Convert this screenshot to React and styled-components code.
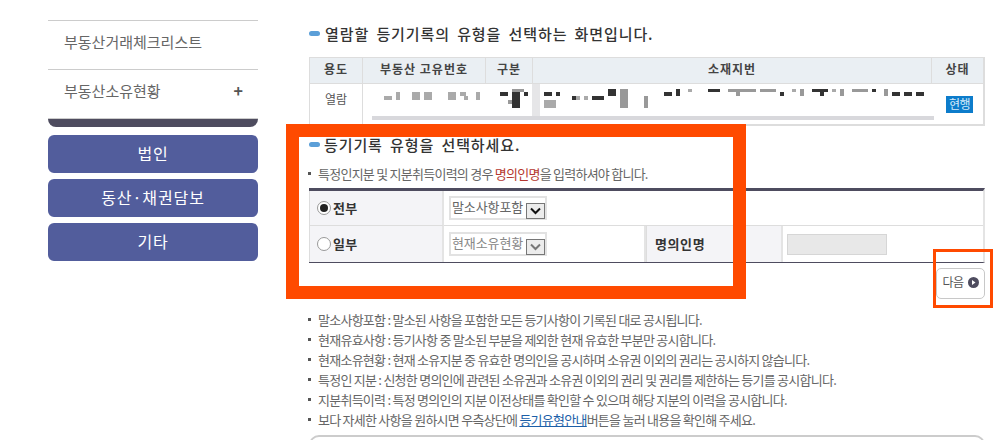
import React from 'react';
import styled, { createGlobalStyle } from 'styled-components';

const Global = createGlobalStyle`
  html, body {
    margin: 0;
    padding: 0;
    background: #fff;
    overflow: hidden;
  }
  body {
    font-family: 'Noto Sans CJK KR', 'Noto Sans', sans-serif;
  }
`;

const Page = styled.div`
  position: relative;
  width: 1007px;
  height: 440px;
  overflow: hidden;
  display: flex;
  align-items: flex-start;
  padding-left: 48px;
  box-sizing: border-box;
`;

const Sidebar = styled.aside`
  width: 210px;
  padding-top: 20px;
  margin-right: 51px;
  flex-shrink: 0;
`;

const MenuItem = styled.div`
  height: 49px;
  box-sizing: border-box;
  border-top: 1px solid #ccc;
  padding: 0 15px 8px 16px;
  display: flex;
  align-items: center;
  justify-content: space-between;
  font-size: 15px;
  color: #666;
`;

const Plus = styled.span`
  font-size: 16px;
  font-weight: 700;
  color: #555;
  margin-top: -1px;
`;

const DarkEnd = styled.div`
  height: 9px;
  background: #4e4c5f;
  border-top: 1px solid #ccc;
  box-sizing: border-box;
  border-radius: 0 0 8px 8px;
  margin-bottom: 8px;
`;

const CatButton = styled.div`
  height: 38px;
  margin-bottom: 6px;
  padding-bottom: 3px;
  box-sizing: border-box;
  border-radius: 6px;
  background: #525d9c;
  color: #fff;
  font-size: 16px;
  letter-spacing: 0.9px;
  display: flex;
  align-items: center;
  justify-content: center;
`;

const Main = styled.main`
  width: 676px;
  flex-shrink: 0;
  padding-top: 22px;
`;

const Heading = styled.h2`
  margin: ${({ $top }) => $top || 0}px 0 0;
  height: 22px;
  display: flex;
  align-items: center;
  gap: ${({ $gap }) => $gap || 5}px;
  font-size: 15px;
  font-weight: 500;
  letter-spacing: 0.9px;
  word-spacing: 3px;
  color: #333;

  &::before {
    content: '';
    width: 11px;
    height: 5px;
    border-radius: 3px;
    background: #5b9fd8;
  }
`;

const Table = styled.div`
  display: grid;
  grid-template-columns: 53px 123px 47px 399px 1fr;
  grid-template-rows: 26px 1fr;
  margin-top: 13px;
  border: 1px solid #ddd;
  border-width: 1px 2px 2px 1px;
  height: 69px;
  box-sizing: border-box;
`;

const HeadCell = styled.div`
  height: 26px;
  background: #eaeff3;
  border-bottom: 1px solid #ddd;
  border-right: 1px solid #ddd;
  box-sizing: border-box;
  padding-bottom: 4px;
  display: flex;
  align-items: center;
  justify-content: center;
  font-size: 12px;
  font-weight: 700;
  letter-spacing: 1px;
  color: #444;

  &:nth-child(5) {
    border-right: 0;
  }
`;

const BodyCell = styled.div`
  display: flex;
  align-items: flex-start;
  justify-content: center;
  padding-top: ${({ $top }) => $top ?? 9}px;
  border-right: ${({ $line }) => ($line ? '1px solid #ddd' : '0')};
  font-size: 12px;
  color: #555;
`;

const Masked = styled.svg`
  position: absolute;
  left: 372px;
  top: 84px;
`;

const Badge = styled.span`
  background: #0d7ccb;
  color: #d6ebfa;
  font-size: 12px;
  letter-spacing: -0.5px;
  line-height: 15px;
  width: 27px;
  height: 17px;
  text-align: center;
  margin-left: 4px;
`;

const Note = styled.p`
  margin: ${({ $top }) => $top || 0}px 0 0;
  height: 20px;
  padding-bottom: 1px;
  box-sizing: border-box;
  display: flex;
  align-items: center;
  font-size: 13px;
  letter-spacing: -0.75px;
  color: #666;
  white-space: pre;

  &::before {
    content: '';
    width: 3px;
    height: 3px;
    background: #555;
    margin: 0 7px 0 -1px;
  }
`;

const Red = styled.span`
  color: #b5372f;
`;

const Link = styled.span`
  color: #1c5fa8;
  text-decoration: underline;
`;

const FormTable = styled.div`
  margin-top: 4px;
  border-top: 3px solid #4e4c5f;
  border-bottom: 1px solid #4e4c5f;
  border-right: 2px solid #e4e4e4;
  display: grid;
  grid-template-columns: 135px 202px 137px 1fr;
  grid-template-rows: 35px 36px;
  box-sizing: border-box;
`;

const Label = styled.div`
  background: #f4f4f7;
  border-left: 1px solid #ddd;
  border-right: 2px solid #e4e4e4;
  border-bottom: ${({ $last }) => ($last ? '0' : '1px solid #ddd')};
  box-sizing: border-box;
  display: flex;
  align-items: center;
  padding-left: ${({ $pad }) => $pad || 7}px;
  padding-bottom: 2px;
  gap: 2px;
  font-size: 13px;
  font-weight: 700;
  color: #333;
  letter-spacing: ${({ $wide }) => ($wide ? '0.6px' : '0.2px')};
`;

const Field = styled.div`
  grid-column: ${({ $span }) => ($span ? `span ${$span}` : 'auto')};
  border-bottom: ${({ $last }) => ($last ? '0' : '1px solid #ddd')};
  border-right: ${({ $line }) => ($line ? '2px solid #e4e4e4' : '0')};
  box-sizing: border-box;
  display: flex;
  align-items: center;
  padding-left: ${({ $pad }) => $pad || 5}px;
`;

const Radio = styled.span`
  width: 14px;
  height: 14px;
  box-sizing: border-box;
  border-radius: 50%;
  border: 1px solid #999;
  background: #fff;
  display: flex;
  align-items: center;
  justify-content: center;
  margin-top: 2px;

  &::after {
    content: '';
    width: 8px;
    height: 8px;
    border-radius: 50%;
    background: ${({ $on }) => ($on ? '#222' : 'transparent')};
  }
`;

const Select = styled.div`
  width: 98px;
  height: 24px;
  box-sizing: border-box;
  border: 2px solid #e2e2e2;
  display: flex;
  align-items: center;
  justify-content: space-between;
  padding: 0 0 3px 1px;
  font-size: 13px;
  letter-spacing: -0.1px;
  line-height: 16px;
  color: ${({ $off }) => ($off ? '#888' : '#666')};
`;

const Arrow = styled.span`
  width: 19px;
  height: 16px;
  box-sizing: border-box;
  border: 1px solid #777;
  background: #ececec;
  display: flex;
  align-items: center;
  justify-content: center;
  margin: 5px 0 -3px;
`;

const Disabled = styled.div`
  width: 100px;
  height: 21px;
  background: #e8e8e8;
  border: 1px solid #d6d6d6;
  box-sizing: border-box;
`;

const ButtonRow = styled.div`
  display: flex;
  justify-content: flex-end;
  height: 31px;
  margin: 5px 0 11px;
`;

const NextButton = styled.div`
  width: 49px;
  height: 31px;
  box-sizing: border-box;
  border: 1px solid #c8c8c8;
  border-radius: 5px;
  padding-bottom: 5px;
  display: flex;
  align-items: center;
  justify-content: center;
  gap: 4px;
  font-size: 12px;
  letter-spacing: -0.5px;
  color: #555;

  svg {
    margin-top: 3px;
  }
`;

const Bottom = styled.div`
  height: 30px;
  margin-top: 5px;
  border: 2px solid #ccc;
  border-radius: 10px;
`;

const Mark = styled.div`
  position: absolute;
  box-sizing: border-box;
  left: ${({ $x }) => $x}px;
  top: ${({ $y }) => $y}px;
  width: ${({ $w }) => $w}px;
  height: ${({ $h }) => $h}px;
  border: ${({ $b }) => $b}px solid #ff4a00;
`;

const chevron = color => (
  <svg width="11" height="8" viewBox="0 0 11 8">
    <path d="M1 1.5 5.5 6 10 1.5" fill="none" stroke={color} strokeWidth="2" />
  </svg>
);

const heads = ['용도', '부동산 고유번호', '구분', '소재지번', '상태'];

// 가려진 글자 조각: x, y, w, h, fill
const D = '#333';
const G = '#999';
const L = '#aaa';
const masked = [
  [160, 0, 8, 32, '#e6e6e8'],
  [12, 12, 8, 4, L], [24, 8, 4, 8, L], [40, 8, 8, 8, L], [52, 8, 8, 8, L],
  [76, 8, 8, 8, L], [88, 8, 6, 4, L], [92, 12, 4, 4, L], [104, 8, 4, 8, L],
  [128, 8, 8, 4, D], [140, 5, 12, 3, G], [140, 8, 8, 16, D], [136, 16, 4, 4, G], [152, 8, 4, 4, D],
  [172, 8, 8, 4, D], [184, 8, 4, 4, D], [172, 16, 12, 8, L],
  [200, 12, 4, 4, D], [204, 12, 4, 4, L], [212, 12, 4, 4, L], [220, 12, 12, 4, D],
  [236, 5, 8, 7, D], [248, 5, 8, 19, G], [272, 12, 4, 12, G],
  [292, 8, 8, 4, D], [304, 5, 4, 7, D], [316, 5, 4, 3, L], [336, 5, 12, 3, D],
  [356, 5, 28, 3, G], [364, 8, 4, 4, G], [388, 5, 16, 3, G], [408, 8, 4, 4, D],
  [420, 5, 4, 3, L], [428, 5, 4, 7, G], [440, 5, 16, 3, D], [448, 8, 4, 4, D],
  [460, 5, 4, 3, L], [468, 5, 4, 7, G], [480, 5, 16, 3, G], [500, 5, 4, 3, D],
  [512, 5, 4, 7, G], [520, 8, 8, 4, D], [532, 8, 8, 4, D], [544, 8, 8, 4, D],
  [0, 32, 562, 4, '#d8d8dc'],
];

const rules = [
  '말소사항포함 : 말소된 사항을 포함한 모든 등기사항이 기록된 대로 공시됩니다.',
  '현재유효사항 : 등기사항 중 말소된 부분을 제외한 현재 유효한 부분만 공시합니다.',
  '현재소유현황 : 현재 소유지분 중 유효한 명의인을 공시하며 소유권 이외의 권리는 공시하지 않습니다.',
  '특정인 지분 : 신청한 명의인에 관련된 소유권과 소유권 이외의 권리 및 권리를 제한하는 등기를 공시합니다.',
  '지분취득이력 : 특정 명의인의 지분 이전상태를 확인할 수 있으며 해당 지분의 이력을 공시합니다.',
];

const App = () => (
  <Page>
    <Global />
    <Sidebar>
      <MenuItem>부동산거래체크리스트</MenuItem>
      <MenuItem>
        부동산소유현황
        <Plus>+</Plus>
      </MenuItem>
      <DarkEnd />
      <CatButton>법인</CatButton>
      <CatButton>동산·채권담보</CatButton>
      <CatButton>기타</CatButton>
    </Sidebar>

    <Main>
      <Heading>열람할 등기기록의 유형을 선택하는 화면입니다.</Heading>
      <Table>
        {heads.map(h => (
          <HeadCell key={h}>{h}</HeadCell>
        ))}
        <BodyCell $line $top={6}>열람</BodyCell>
        <BodyCell />
        <BodyCell />
        <BodyCell />
        <BodyCell $top={12}>
          <Badge>현행</Badge>
        </BodyCell>
      </Table>
      <Heading $top={7} $gap={4}>등기기록 유형을 선택하세요.</Heading>
      <Note $top={9}>
        특정인지분 및 지분취득이력의 경우 <Red>명의인명</Red>을 입력하셔야 합니다.
      </Note>
      <FormTable>
        <Label>
          <Radio $on />
          전부
        </Label>
        <Field $span={3}>
          <Select>
            말소사항포함
            <Arrow>{chevron('#111')}</Arrow>
          </Select>
        </Field>
        <Label $last>
          <Radio />
          일부
        </Label>
        <Field $last $line>
          <Select $off>
            현재소유현황
            <Arrow>{chevron('#777')}</Arrow>
          </Select>
        </Field>
        <Label $last $pad={8} $wide>명의인명</Label>
        <Field $last $pad={4}>
          <Disabled />
        </Field>
      </FormTable>
      <ButtonRow>
        <NextButton>
          다음
          <svg width="11" height="11" viewBox="0 0 11 11">
            <circle cx="5.5" cy="5.5" r="5.5" fill="#4e4c5f" />
            <path d="M4 3 7.5 5.5 4 8Z" fill="#fff" />
          </svg>
        </NextButton>
      </ButtonRow>
      {rules.map(r => (
        <Note key={r}>{r}</Note>
      ))}
      <Note>
        보다 자세한 사항을 원하시면 우측상단에 <Link>등기유형안내</Link>버튼을 눌러 내용을 확인해 주세요.
      </Note>
      <Bottom />
    </Main>

    <Masked width="640" height="38" viewBox="0 0 640 38">
      {masked.map(([x, y, w, h, fill]) => (
        <rect key={`${x}-${y}`} x={x} y={y} width={w} height={h} fill={fill} />
      ))}
    </Masked>
    <Mark $x={286} $y={124} $w={460} $h={175} $b={13} />
    <Mark $x={933} $y={249} $w={60} $h={59} $b={3} />
  </Page>
);

export default App;
